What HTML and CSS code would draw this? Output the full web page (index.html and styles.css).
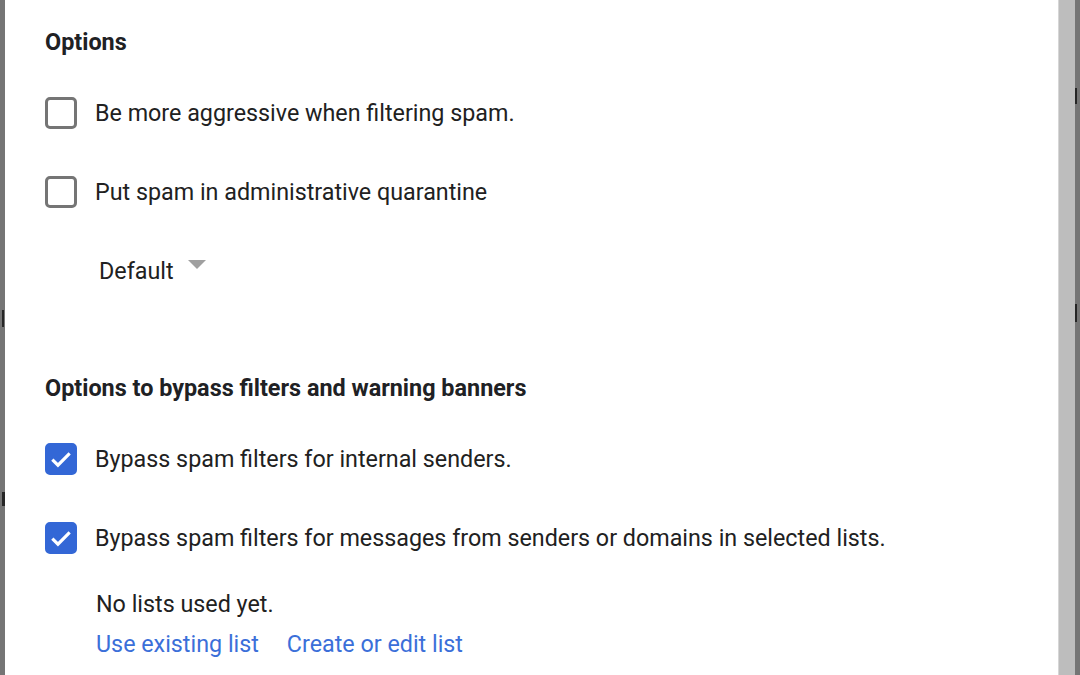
FILE: index.html
```html
<!DOCTYPE html>
<html lang="en">
<head>
  <meta charset="UTF-8">
  <title>Spam settings</title>
  <link rel="stylesheet" href="styles.css">
</head>
<body>
  <div class="screen">
    <div class="edge">
      <span class="peek peek-l1"></span>
      <span class="peek peek-l2"></span>
    </div>
    <div class="dialog">
      <h2 class="heading">Options</h2>
      <label class="option first">
        <span class="box"></span>
        <span>Be more aggressive when filtering spam.</span>
      </label>
      <label class="option">
        <span class="box"></span>
        <span>Put spam in administrative quarantine</span>
      </label>
      <div class="select">
        <span>Default</span>
        <span class="caret"></span>
      </div>

      <h2 class="heading second">Options to bypass filters and warning banners</h2>
      <label class="option first">
        <span class="box checked">
          <svg viewBox="0 0 24 24" width="26" height="26"><path d="M4 12.5l5.2 5.2L20 6.8" fill="none" stroke="#fff" stroke-width="2.9"/></svg>
        </span>
        <span>Bypass spam filters for internal senders.</span>
      </label>
      <label class="option">
        <span class="box checked">
          <svg viewBox="0 0 24 24" width="26" height="26"><path d="M4 12.5l5.2 5.2L20 6.8" fill="none" stroke="#fff" stroke-width="2.9"/></svg>
        </span>
        <span>Bypass spam filters for messages from senders or domains in selected lists.</span>
      </label>
      <div class="note">No lists used yet.</div>
      <div class="links">
        <a href="#">Use existing list</a>
        <a href="#">Create or edit list</a>
      </div>
    </div>
    <div class="scrollbar"></div>
    <div class="edge">
      <span class="peek peek-r1"></span>
      <span class="peek peek-r2"></span>
    </div>
  </div>
</body>
</html>
```

FILE: styles.css
```css
body {
  margin: 0;
  font-family: Roboto, "Liberation Sans", Arial, sans-serif;
  color: #202124;
  overflow: hidden;
}
.screen {
  display: flex;
  height: 675px;
}
.edge {
  width: 5px;
  background: #757575;
  position: relative;
}
/* fragments of the page behind the dialog */
.peek {
  position: absolute;
  width: 2px;
  background: #262626;
}
.peek-l1 { left: 2px; top: 310px; height: 17px; }
.peek-l2 { left: 2px; top: 492px; height: 14px; width: 3px; }
.peek-r1 { left: 0; top: 88px; height: 16px; }
.peek-r2 { left: 0; top: 304px; height: 18px; }
.scrollbar {
  width: 16px;
  background: #bdbdbd;
  border-left: 1px solid #d6d6d6;
}
.dialog {
  flex: 1;
  background: #fff;
  padding: 27px 0 0 40px;
}
.heading {
  margin: 0;
  font-size: 23.4px;
  line-height: 30px;
  font-weight: 700;
  color: #202124;
}
.heading.second {
  margin-top: 87px;
}
.option {
  display: flex;
  align-items: center;
  gap: 18px;
  font-size: 23.3px;
  line-height: 32px;
  margin-top: 47px;
  color: #212121;
}
.option.first {
  margin-top: 40px;
}
.box {
  width: 26px;
  height: 26px;
  border: 3px solid #757575;
  border-radius: 5px;
  flex: none;
  display: flex;
  align-items: center;
  justify-content: center;
}
.box.checked {
  background: #3367d6;
  border-color: #3367d6;
}
.select {
  display: flex;
  align-items: center;
  gap: 14px;
  margin: 48px 0 0 54px;
  font-size: 23.3px;
  line-height: 30px;
  color: #212121;
}
.caret {
  width: 0;
  height: 0;
  border-left: 9px solid transparent;
  border-right: 9px solid transparent;
  border-top: 9px solid #a0a0a0;
  margin-top: -14px;
}
.note {
  margin: 35px 0 0 51px;
  font-size: 23.3px;
  line-height: 30px;
  color: #212121;
}
.links {
  display: flex;
  gap: 28px;
  margin: 10px 0 0 51px;
  font-size: 23.3px;
  line-height: 30px;
}
.links a {
  color: #3b6fd9;
  text-decoration: none;
}
```
